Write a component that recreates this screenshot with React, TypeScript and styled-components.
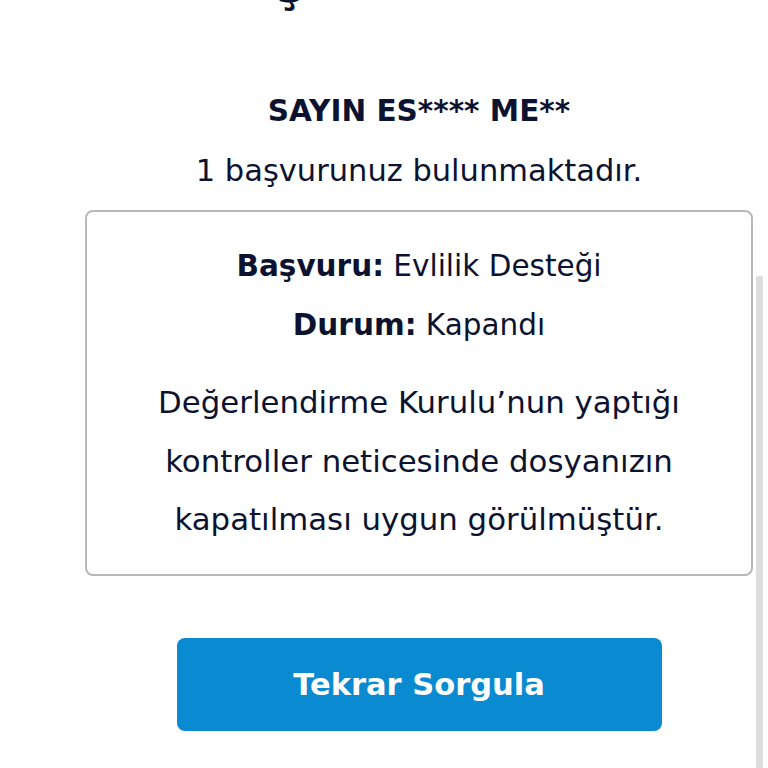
import React from "react";
import styled, { createGlobalStyle } from "styled-components";

const Global = createGlobalStyle`
  html, body { margin: 0; padding: 0; background: #ffffff; }
  body { font-family: "DejaVu Sans", "Open Sans", sans-serif; color: #0c1330; }
  * { box-sizing: border-box; }
`;

const Page = styled.div`
  position: relative;
  width: 768px;
  height: 768px;
  overflow: hidden;
  background: #fff;
`;

const Column = styled.main`
  width: 668px;
  margin-left: 85px;
  display: flex;
  flex-direction: column;
  align-items: center;
`;

const TopClip = styled.div`
  width: 100%;
  height: 82px;
  overflow: hidden;
  position: relative;
`;

const CutHeading = styled.h1`
  margin: 0;
  position: absolute;
  left: 192px;
  top: -35px;
  font-size: 44px;
  font-weight: 800;
  line-height: 44px;
  color: #0c1330;
`;

const Title = styled.h2`
  margin: 0;
  font-size: 29.5px;
  font-weight: 700;
  line-height: 59px;
  text-align: center;
  color: #0c1330;
`;

const Subtitle = styled.p`
  margin: 0;
  font-size: 30.5px;
  font-weight: 400;
  line-height: 59px;
  text-align: center;
`;

const Card = styled.section`
  width: 668px;
  margin-top: 10px;
  border: 2px solid #b8b8b8;
  border-radius: 8px;
  padding: 25px 30px 25px;
  display: flex;
  flex-direction: column;
  align-items: center;
  text-align: center;
`;

const InfoLine = styled.p`
  margin: 0;
  font-size: 29.5px;
  line-height: 59px;
  b { font-weight: 700; }
`;

const Message = styled.p`
  margin: 18px 0 0;
  font-size: 30.8px;
  line-height: 58.5px;
  max-width: 604px;
`;

const Button = styled.button`
  margin-top: 62px;
  width: 485px;
  height: 93px;
  border: none;
  border-radius: 8px;
  background: #0a8ad0;
  color: #ffffff;
  font-family: "DejaVu Sans", "Open Sans", sans-serif;
  font-size: 30.5px;
  font-weight: 700;
  cursor: pointer;
`;

const ScrollStrip = styled.div`
  position: absolute;
  left: 756px;
  top: 276px;
  width: 7px;
  bottom: 0;
  background: #dddddd;
  border-radius: 2px 2px 0 0;
`;

export default function App() {
  return (
    <Page>
      <Global />
      <Column>
        <TopClip>
          <CutHeading>ş</CutHeading>
        </TopClip>
        <Title>SAYIN ES**** ME**</Title>
        <Subtitle>1 başvurunuz bulunmaktadır.</Subtitle>
        <Card>
          <InfoLine>
            <b>Başvuru:</b> Evlilik Desteği
          </InfoLine>
          <InfoLine>
            <b>Durum:</b> Kapandı
          </InfoLine>
          <Message>
            Değerlendirme Kurulu’nun yaptığı kontroller neticesinde dosyanızın kapatılması uygun görülmüştür.
          </Message>
        </Card>
        <Button>Tekrar Sorgula</Button>
      </Column>
      <ScrollStrip />
    </Page>
  );
}
